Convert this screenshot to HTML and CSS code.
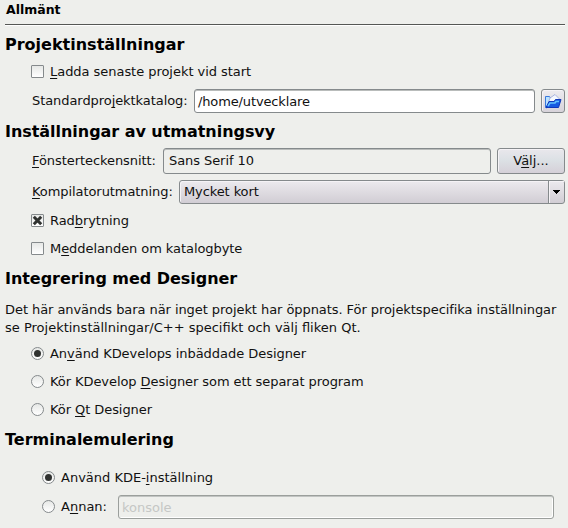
FILE: index.html
```html
<!DOCTYPE html>
<html lang="sv">
<head>
<meta charset="utf-8">
<title>Allmänt</title>
<link rel="stylesheet" href="styles.css">
</head>
<body>
<main class="page">
  <h1 class="title">Allmänt</h1>

  <section class="project">
    <h2>Projektinställningar</h2>
    <label class="option"><span class="check"></span><span class="tight"><u>L</u>adda senaste projekt vid start</span></label>
    <div class="row directory">
      <span class="label tighter">Standardpro<u>j</u>ektkatalog:</span>
      <div class="field path">/home/utvecklare</div>
      <button class="button browse" aria-label="Öppna">
        <svg width="18" height="18" viewBox="0 0 18 18">
          <path d="M1.500 15.500V4.500h4l1 1.500v3l-4 7z" fill="#b9e2ff" stroke="#3978dc"/>
          <path d="M4.500 10l1.500-4 5-3.500 5 5-2 4H5z" fill="#f4f7ff" stroke="#98a4d8" stroke-width=".8"/>
          <path d="M2 15.500l3-6h5l1.500-2H17l-2.500 8z" fill="#175be2" stroke="#1038bb"/>
          <path d="M4 14l2-3h5l1-1.500h3" fill="none" stroke="#66c3ff" stroke-width="1.500"/>
        </svg>
      </button>
    </div>
  </section>

  <section class="output">
    <h2 class="tight">Inställningar av utmatningsvy</h2>
    <div class="row font">
      <span class="label tighter"><u>F</u>önsterteckensnitt:</span>
      <div class="field sample tighter">Sans Serif 10</div>
      <button class="button choose">V<u>ä</u>lj...</button>
    </div>
    <div class="row compiler">
      <span class="label tighter"><u>K</u>ompilatorutmatning:</span>
      <div class="combo"><span class="value">Mycket kort</span><span class="arrow"><svg width="7" height="4" viewBox="0 0 7 4" shape-rendering="crispEdges"><path d="M0 0h7v1H6v1H5v1H4v1H3V3H2V2H1V1H0z" fill="#000"/></svg></span></div>
    </div>
    <label class="option wrap"><span class="check"><svg width="11" height="11" viewBox="0 0 11 11"><path d="M1.800 1.800l7.400 7.400M9.200 1.800L1.800 9.200" stroke="#303230" stroke-width="3"/></svg></span><span class="tighter">Rad<u>b</u>rytning</span></label>
    <label class="option"><span class="check"></span><span class="tighter">M<u>e</u>ddelanden om katalogbyte</span></label>
  </section>

  <section class="designer">
    <h2 class="tight">Integrering med Designer</h2>
    <p><span class="intro">Det här används bara när inget projekt har öppnats. För projektspecifika inställningar</span><br>se Projektinställningar/C++ specifikt och välj fliken Qt.</p>
    <label class="option"><span class="radio on"></span><span class="tight">An<u>v</u>änd KDevelops inbäddade Designer</span></label>
    <label class="option"><span class="radio"></span><span class="tighter">Kör KDevelop <u>D</u>esigner som ett separat program</span></label>
    <label class="option"><span class="radio"></span><span class="tighter">Kör <u>Q</u>t Designer</span></label>
  </section>

  <section class="terminal">
    <h2>Terminalemulering</h2>
    <label class="option kde"><span class="radio on"></span><span>Använd KDE-<u>i</u>nställning</span></label>
    <div class="row other">
      <span class="radio"></span><span class="label">A<u>n</u>nan:</span>
      <div class="field disabled">konsole</div>
    </div>
  </section>
</main>
</body>
</html>
```
FILE: styles.css
```css
* { box-sizing: border-box; }
body {
  margin: 0;
  background: #eeefec;
  color: #111;
  font: 13px/18px "DejaVu Sans", sans-serif;
  overflow: hidden;
}
.page { width: 568px; height: 528px; padding: 0 3px 0 5px; }
.title {
  margin: 0;
  height: 26px;
  padding-left: 1px;
  font-size: 12.500px;
  line-height: 20px;
  color: #000;
  border-bottom: 1px solid #fff;
  box-shadow: inset 0 -1px #555755;
}
h2 { margin: 0; font-size: 16px; line-height: 20px; color: #000; }
u { text-decoration: underline; text-underline-offset: 2px; text-decoration-thickness: 1px; text-decoration-skip-ink: none; }
p { margin: 0; }
.tight { letter-spacing: -0.04px; }
.tighter { letter-spacing: -0.07px; }
.intro { letter-spacing: -0.065px; font-variant-ligatures: common-ligatures; }
.row { display: flex; align-items: center; white-space: nowrap; padding-left: 27px; }
.option { display: flex; align-items: center; gap: 6px; height: 28px; padding-left: 26px; white-space: nowrap; }
.check, .radio {
  display: flex; align-items: center; justify-content: center;
  flex: none; width: 13px; height: 13px;
  border: 1px solid #858a8c;
  background: linear-gradient(#e6e8e6, #fff);
}
.check { border-radius: 1px; margin-top: 1px; }
.check + span { padding-top: 2px; }
.radio { border-radius: 50%; margin-bottom: 1px; }
.radio.on::after { content: ""; width: 7px; height: 7px; border-radius: 50%; background: #303230; }
.label { flex: none; }
.field {
  flex: none;
  height: 24px;
  padding: 0 4px 0 3px;
  line-height: 24px;
  border: 1px solid #858a8c;
  border-radius: 3px;
  box-shadow: inset 0 1px #b9bcbb;
}
.button {
  flex: none; padding: 0; font: inherit; color: #111;
  border: 1px solid #858a8c; border-radius: 3px;
  background: linear-gradient(#edebef, #d7d3da);
  box-shadow: inset 1px 1px #f5f3f6;
}

.project { padding-top: 9px; height: 95px; }
.project .option { height: 32px; }
.directory { margin-top: 2px; }
.path { width: 341px; background: #fff; margin-left: auto; letter-spacing: -0.13px; }
.browse { width: 24px; height: 24px; margin-left: 6px; display: flex; align-items: center; justify-content: center; }

.output { height: 147px; padding-top: 1px; }
.output h2 { margin-bottom: 6px; }
.sample { width: 328px; height: 26px; margin-left: auto; padding-left: 5px; }
.choose { width: 68px; height: 26px; margin-left: 6px; background: linear-gradient(#e9e7ec, #dce1e5 45%, #d5d0d8); }
.compiler { margin-top: 6px; }
.combo {
  display: flex; width: 386px; height: 24px; margin-left: auto;
  border: 1px solid #858a8c; border-radius: 3px;
  background: linear-gradient(#eceaee, #d1cdd4);
  box-shadow: inset 1px 1px #f5f3f6;
}
.value { flex: 1; padding-left: 4px; line-height: 22px; letter-spacing: -0.1px; }
.arrow { width: 16px; border-left: 1px solid #858a8c; box-shadow: inset 1px 1px #f5f3f6; display: flex; align-items: center; justify-content: center; }
.wrap { margin-top: 2px; }

.designer { height: 161px; padding-top: 1px; }
.designer p { margin: 12px 0 3px; white-space: nowrap; }

.terminal { padding-top: 1px; }
.terminal .option { margin-top: 14px; padding-left: 37px; }
.other { padding-left: 37px; margin-top: 3px; }
.other .label { margin-left: 6px; }
.disabled { width: 436px; margin-left: auto; margin-right: 11px; color: #c5c7c5; border-color: #9b9f9c; box-shadow: inset 0 1px #c1c4c2, inset -1px -1px #fff; }
```
